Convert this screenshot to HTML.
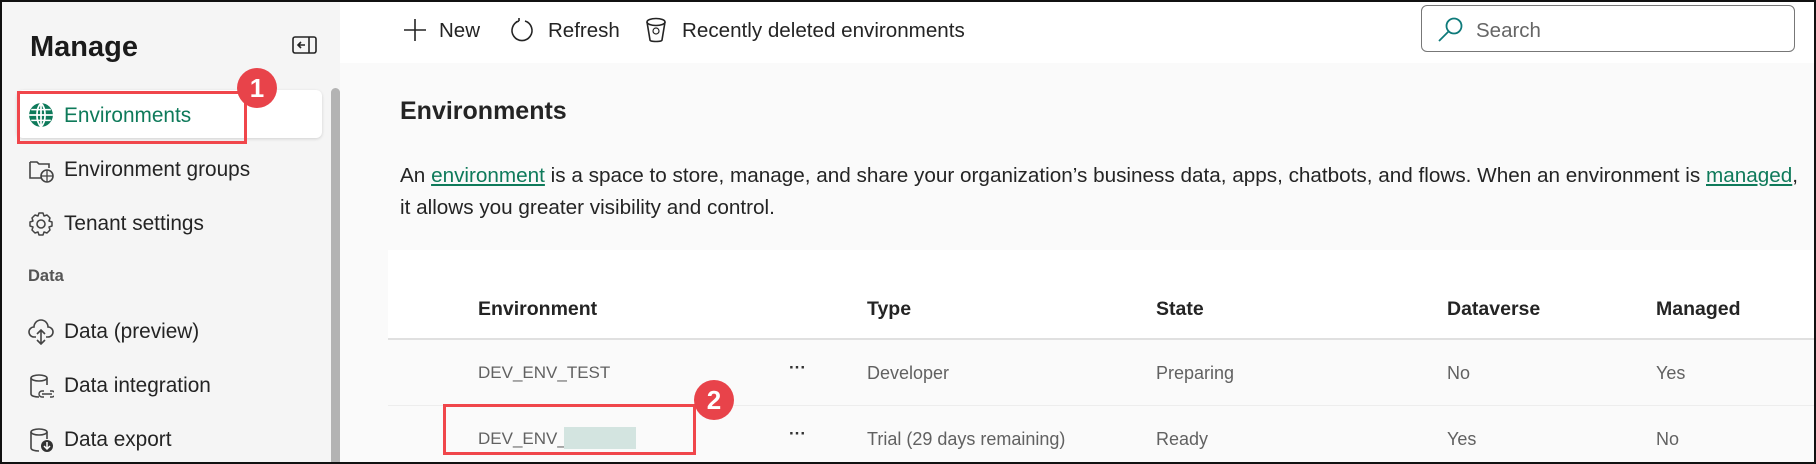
<!DOCTYPE html>
<html><head><meta charset="utf-8">
<style>
*{margin:0;padding:0;box-sizing:border-box}
body{width:1816px;height:464px;overflow:hidden;position:relative;background:#fafafa;font-family:"Liberation Sans",sans-serif;color:#242424}
.a{position:absolute;white-space:nowrap}
.side{position:absolute;left:0;top:0;width:340px;height:464px;background:#f5f5f5}
.nav{position:absolute;left:64px;font-size:20.8px;color:#242424;line-height:24px}
.ico{position:absolute;left:28px;width:26px;height:26px}
.g{color:#0e7a5a}
.hd{font-weight:bold;font-size:19.5px;color:#242424;top:297px;line-height:24px}
.c1{font-size:17px;color:#616161;top:361px;line-height:24px}
.c2{font-size:17px;color:#616161;top:427px;line-height:24px}
.badge{position:absolute;border-radius:50%;background:#e8434a;color:#fff;font-weight:bold;font-size:26px;text-align:center}
</style></head><body>
<div class="side"></div>
<div class="a" style="left:30px;top:29px;font-size:29px;font-weight:bold;line-height:36px;color:#1b1b1b">Manage</div>
<svg class="a" style="left:292px;top:36px" width="25" height="18" viewBox="0 0 25 18"><rect x="1" y="1" width="23" height="16" rx="2" fill="none" stroke="#242424" stroke-width="1.6"/><line x1="17" y1="1" x2="17" y2="17" stroke="#242424" stroke-width="1.6"/><path d="M13 9H6M9 6L6 9L9 12" fill="none" stroke="#242424" stroke-width="1.6"/></svg>
<div class="a" style="left:17px;top:90px;width:305px;height:48px;background:#fff;border-radius:6px;box-shadow:0 1px 3px rgba(0,0,0,.15)"></div>
<svg class="ico" style="top:102px" viewBox="0 0 24 24"><circle cx="12" cy="12" r="11" fill="#0e7a5a"/><path d="M1 12H23M12 1C7 6 7 18 12 23M12 1C17 6 17 18 12 23M12 1V23" stroke="#fff" stroke-width="1.6" fill="none"/><path d="M3 7H21M3 17H21" stroke="#fff" stroke-width="1.4"/></svg>
<div class="nav g" style="top:104px">Environments</div>
<div class="a" style="left:17px;top:91px;width:230px;height:53px;border:3px solid #f0464b"></div>
<div class="badge" style="left:237px;top:68px;width:40px;height:40px;line-height:40px">1</div>
<svg class="ico" style="top:157px" viewBox="0 0 26 26"><path d="M2 5V21H13M2 5H9L11 7H21V11" fill="none" stroke="#444" stroke-width="1.6"/><circle cx="19" cy="19" r="6" fill="none" stroke="#444" stroke-width="1.6"/><path d="M13 19H25M19 13V25" stroke="#444" stroke-width="1.3"/></svg>
<div class="nav" style="top:158px">Environment groups</div>
<svg class="ico" style="top:211px" viewBox="0 0 26 26"><circle cx="13" cy="13" r="4" fill="none" stroke="#444" stroke-width="1.6"/><path d="M11 2H15L16 5L19 4L22 7L21 10L24 11V15L21 16L22 19L19 22L16 21L15 24H11L10 21L7 22L4 19L5 16L2 15V11L5 10L4 7L7 4L10 5Z" fill="none" stroke="#444" stroke-width="1.5" stroke-linejoin="round"/></svg>
<div class="nav" style="top:212px">Tenant settings</div>
<div class="a" style="left:28px;top:267px;font-size:16.5px;font-weight:bold;color:#555">Data</div>
<svg class="ico" style="top:319px" viewBox="0 0 26 26"><path d="M8 18H6A5 5 0 0 1 6 8A7 7 0 0 1 20 8A5 5 0 0 1 20 18H18" fill="none" stroke="#444" stroke-width="1.6"/><path d="M13 11V25M9 15L13 11L17 15M9 21L13 25L17 21" fill="none" stroke="#444" stroke-width="1.6"/></svg>
<div class="nav" style="top:320px">Data (preview)</div>
<svg class="ico" style="top:373px" viewBox="0 0 26 26"><ellipse cx="11" cy="5" rx="8" ry="3" fill="none" stroke="#444" stroke-width="1.6"/><path d="M3 5V21C3 23 7 24 11 24M19 5V12" fill="none" stroke="#444" stroke-width="1.6"/><path d="M14 21H24M16 18H14A3 3 0 0 0 14 24H16M22 18H24A3 3 0 0 1 24 24H22" fill="none" stroke="#444" stroke-width="1.4"/></svg>
<div class="nav" style="top:374px">Data integration</div>
<svg class="ico" style="top:427px" viewBox="0 0 26 26"><ellipse cx="11" cy="5" rx="8" ry="3" fill="none" stroke="#444" stroke-width="1.6"/><path d="M3 5V21C3 23 7 24 11 24M19 5V12" fill="none" stroke="#444" stroke-width="1.6"/><circle cx="19" cy="19" r="6" fill="#333"/><path d="M19 15V22M16 19L19 22L22 19" stroke="#fff" stroke-width="1.5" fill="none"/></svg>
<div class="nav" style="top:428px">Data export</div>
<div class="a" style="left:331px;top:88px;width:9px;height:376px;background:#b3b3b3;border-radius:5px 5px 0 0"></div>

<div class="a" style="left:340px;top:0;width:1476px;height:63px;background:#fff"></div>
<svg class="a" style="left:403px;top:18px" width="24" height="24" viewBox="0 0 24 24"><path d="M12 1V23M1 12H23" stroke="#242424" stroke-width="1.6"/></svg>
<div class="a" style="left:439px;top:19px;font-size:20.5px;line-height:24px">New</div>
<svg class="a" style="left:510px;top:18px" width="24" height="24" viewBox="0 0 24 24"><path d="M9 3A10 10 0 1 0 15 3M9 3V0M9 3L6 4" fill="none" stroke="#242424" stroke-width="1.6"/></svg>
<div class="a" style="left:548px;top:19px;font-size:20.5px;line-height:24px">Refresh</div>
<svg class="a" style="left:645px;top:17px" width="22" height="26" viewBox="0 0 22 26"><ellipse cx="11" cy="5" rx="9" ry="3.5" fill="none" stroke="#242424" stroke-width="1.6"/><path d="M2 5L5 23C5 25 17 25 17 23L20 5" fill="none" stroke="#242424" stroke-width="1.6"/><circle cx="11" cy="14" r="3" fill="none" stroke="#242424" stroke-width="1.2"/></svg>
<div class="a" style="left:682px;top:19px;font-size:20.6px;line-height:24px">Recently deleted environments</div>
<div class="a" style="left:1421px;top:5px;width:374px;height:47px;border:1px solid #777;border-radius:6px;background:#fff"></div>
<svg class="a" style="left:1437px;top:17px" width="27" height="25" viewBox="0 0 27 25"><circle cx="17" cy="9" r="7.5" fill="none" stroke="#0e7a7a" stroke-width="1.8"/><path d="M11.5 14.5L2 24" stroke="#0e7a7a" stroke-width="1.8"/></svg>
<div class="a" style="left:1476px;top:19px;font-size:20.5px;color:#666;line-height:24px">Search</div>

<div class="a" style="left:400px;top:96px;font-size:25px;font-weight:bold;line-height:30px">Environments</div>
<div class="a" style="left:400px;top:160px;font-size:20.7px;line-height:32px">An <u class="g">environment</u> is a space to store, manage, and share your organization’s business data, apps, chatbots, and flows. When an environment is <u class="g">managed</u>,<br>it allows you greater visibility and control.</div>

<div class="a" style="left:388px;top:250px;width:1428px;height:88px;background:#fff"></div>
<div class="a" style="left:388px;top:338px;width:1428px;height:2px;background:#e0e0e0"></div>
<div class="a" style="left:388px;top:405px;width:1428px;height:1px;background:#ededed"></div>
<div class="a hd" style="left:478px">Environment</div>
<div class="a hd" style="left:867px">Type</div>
<div class="a hd" style="left:1156px">State</div>
<div class="a hd" style="left:1447px">Dataverse</div>
<div class="a hd" style="left:1656px">Managed</div>
<div class="a c1" style="left:478px">DEV_ENV_TEST</div>
<div class="a c1" style="left:789px;color:#333;font-weight:bold;top:356px">···</div>
<div class="a c1" style="left:867px;font-size:18px">Developer</div>
<div class="a c1" style="left:1156px;font-size:18px">Preparing</div>
<div class="a c1" style="left:1447px;font-size:18px">No</div>
<div class="a c1" style="left:1656px;font-size:18px">Yes</div>
<div class="a c2 g" style="left:478px">DEV_ENV_</div>
<div class="a" style="left:564px;top:427px;width:72px;height:22px;background:#d3e4e0"></div>
<div class="a c1" style="left:789px;color:#333;font-weight:bold;top:422px">···</div>
<div class="a c2" style="left:867px;font-size:18px">Trial (29 days remaining)</div>
<div class="a c2" style="left:1156px;font-size:18px">Ready</div>
<div class="a c2" style="left:1447px;font-size:18px">Yes</div>
<div class="a c2" style="left:1656px;font-size:18px">No</div>
<div class="a" style="left:443px;top:404px;width:253px;height:51px;border:3px solid #f0464b"></div>
<div class="badge" style="left:694px;top:380px;width:40px;height:40px;line-height:40px">2</div>
<div class="a" style="left:0;top:0;width:1816px;height:464px;border:2px solid #111"></div>
</body></html>
